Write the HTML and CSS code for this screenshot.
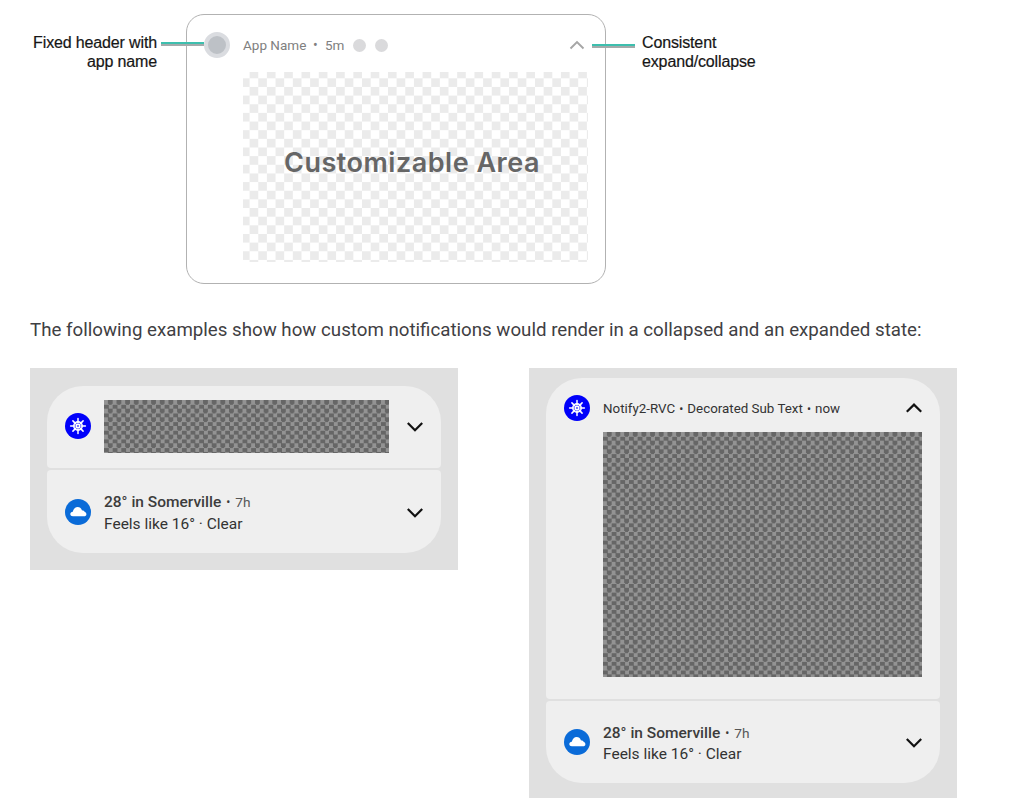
FILE: index.html
```html
<!DOCTYPE html>
<html lang="en">
<head>
<meta charset="utf-8">
<title>Custom notifications</title>
<link rel="stylesheet" href="styles.css">
</head>
<body>
<svg class="defs" width="0" height="0" aria-hidden="true">
  <symbol id="down" viewBox="0 0 18 12"><path d="M1.8 2 9 9.2 16.2 2" fill="none" stroke="currentColor" stroke-width="2.2"/></symbol>
  <symbol id="up" viewBox="0 0 18 12"><path d="M1.8 9.8 9 2.6 16.2 9.8" fill="none" stroke="currentColor" stroke-width="2.2"/></symbol>
  <symbol id="wheel" viewBox="0 0 26 26">
    <circle cx="13" cy="13" r="13" fill="#0000fa"/>
    <circle cx="13" cy="13" r="4.900" fill="#fff"/>
    <path d="M13 5.600v14.800M5.600 13h14.800M7.900 7.900l10.200 10.200M18.100 7.900 7.900 18.100" stroke="#fff" stroke-width="1.500" stroke-linecap="round"/>
    <g fill="#3c3cfb"><circle cx="13" cy="13" r=".9"/><circle cx="11.900" cy="10.400" r=".7"/><circle cx="14.100" cy="10.400" r=".7"/><circle cx="11.900" cy="15.600" r=".7"/><circle cx="14.100" cy="15.600" r=".7"/><circle cx="10.300" cy="12" r=".7"/><circle cx="10.300" cy="14" r=".7"/><circle cx="15.700" cy="12" r=".7"/><circle cx="15.700" cy="14" r=".7"/></g>
  </symbol>
  <symbol id="cloud" viewBox="0 0 26 26">
    <circle cx="13" cy="13" r="13" fill="#0a6bd8"/>
    <path d="M7.900 17.300c-1.500 0-2.600-.8-2.600-2.200 0-1.300 1-2.200 2.500-2.400C8.600 9.800 10.300 8 12.600 8c2.100 0 3.600 1.100 4.300 3.200 1.500 0 2.500.7 2.800 1.900 1.100.3 1.700 1.100 1.700 2.100 0 1.300-1 2.100-2.400 2.100z" fill="#fff"/>
  </symbol>
</svg>
<main class="page">
  <section class="anatomy">
    <p class="callout callout-left">Fixed header with<br>app name</p>
    <div class="template">
      <div class="template-head">
        <span class="avatar"></span>
        <span class="app-name">App Name</span><span class="bullet">•</span><span class="age">5m</span>
        <span class="dot"></span><span class="dot"></span>
        <svg class="template-chevron" viewBox="0 0 16 10"><path d="M1.500 8.500 8 2l6.500 6.500" fill="none" stroke="#a6a6a6" stroke-width="1.900"/></svg>
      </div>
      <div class="custom-area"><span class="custom-label">Customizable Area</span></div>
      <span class="leader leader-left"></span>
      <span class="leader leader-right"></span>
    </div>
    <p class="callout callout-right">Consistent<br>expand/collapse</p>
  </section>

  <p class="intro">The following examples show how custom notifications would render in a collapsed and an expanded state:</p>

  <section class="examples">
    <div class="shade collapsed">
      <article class="card card-top">
        <svg class="icon"><use href="#wheel"/></svg>
        <div class="checker small"></div>
        <svg class="chevron"><use href="#down"/></svg>
      </article>
      <article class="card card-bottom">
        <svg class="icon"><use href="#cloud"/></svg>
        <div class="weather">
          <div class="headline"><strong class="title">28° in Somerville</strong><span class="sep">•</span><span class="time">7h</span></div>
          <div class="detail">Feels like 16° · Clear</div>
        </div>
        <svg class="chevron"><use href="#down"/></svg>
      </article>
    </div>
    <div class="shade expanded">
      <article class="card card-top">
        <header class="notify-head">
          <svg class="icon"><use href="#wheel"/></svg>
          <div class="meta">Notify2-RVC <span class="meta-dot">•</span> Decorated Sub Text <span class="meta-dot">•</span> now</div>
          <svg class="chevron"><use href="#up"/></svg>
        </header>
        <div class="checker large"></div>
      </article>
      <article class="card card-bottom">
        <svg class="icon"><use href="#cloud"/></svg>
        <div class="weather">
          <div class="headline"><strong class="title">28° in Somerville</strong><span class="sep">•</span><span class="time">7h</span></div>
          <div class="detail">Feels like 16° · Clear</div>
        </div>
        <svg class="chevron"><use href="#down"/></svg>
      </article>
    </div>
  </section>
</main>
</body>
</html>
```
FILE: styles.css
```css
* { box-sizing: border-box; }
body { margin: 0; background: #fff; color: #3c4043; font-family: Roboto, sans-serif; }
p { margin: 0; }
svg { display: block; flex: none; }
.defs { position: absolute; }
.page { width: 1024px; height: 811px; overflow: hidden; padding: 14px 0 0 30px; }

.anatomy { display: flex; height: 270px; }
.callout { font: 16px/19px "Liberation Sans", Arial, sans-serif; color: #161616; padding-top: 19px; white-space: nowrap; letter-spacing: -.14px; -webkit-text-stroke: .2px #161616; }
.callout-left { width: 127px; text-align: right; margin-right: 29px; }
.callout-right { margin-left: 36px; }
.template { position: relative; width: 420px; height: 270px; border: 1px solid #b2b2b2; border-radius: 18px; padding: 16px 17px 0; }
.template-head { display: flex; align-items: center; height: 28px; font-size: 13.500px; color: #808080; }
.template-head span { flex: none; }
.avatar { width: 26px; height: 26px; border-radius: 50%; background: #bdc1c6; border: 4px solid #dadce0; margin-right: 13px; }
.app-name { width: 70px; }
.bullet { width: 12px; font-size: 14px; }
.age { width: 28px; }
.dot { width: 13px; height: 13px; border-radius: 50%; background: #dadadc; margin-right: 9px; }
.template-chevron { width: 16px; height: 10px; margin-left: auto; margin-right: 3px; }
.custom-area { width: 345px; height: 190px; margin: 13px 0 0 39px; display: flex; align-items: center; justify-content: center; background: repeating-conic-gradient(#ebebeb 0 25%, #fff 0 50%) 6.600px 6.300px / 17.300px 17.300px; }
.custom-label { font: 600 27px/32px Inter, sans-serif; letter-spacing: .5px; color: #666; margin: -9px 0 0 -7px; white-space: nowrap; }
.leader { position: absolute; height: 4px; background: linear-gradient(#3dbfae 0 60%, #a3aaaa 60%); }
.leader-left { left: -26px; top: 27px; width: 43px; }
.leader-right { left: 405px; top: 29px; width: 43px; }

.intro { margin-top: 34px; height: 24px; font-size: 18.720px; line-height: 24px; color: #3f4043; white-space: nowrap; }

.examples { display: flex; align-items: flex-start; gap: 71px; margin-top: 26px; }
.shade { width: 428px; background: #e0e0e0; display: flex; flex-direction: column; gap: 2px; padding-left: 17px; padding-right: 17px; }
.collapsed { height: 202px; padding-top: 18px; }
.expanded { height: 430px; padding-top: 10px; }
.card { background: #efefef; display: flex; align-items: center; padding: 0 17px 0 18px; }
.card-top { border-radius: 36px 36px 4px 4px; }
.card-bottom { border-radius: 4px 4px 36px 36px; height: 82px; }
.collapsed .card-bottom { height: 83px; }
.collapsed .card-top { height: 82px; padding-bottom: 2px; }
.expanded .card-top { height: 321px; display: block; padding-top: 16px; }
.icon { width: 26px; height: 26px; margin-right: 13px; }
.chevron { width: 18px; height: 12px; color: #111; margin-left: auto; }
.card > .chevron { margin-top: 2px; }
.notify-head { display: flex; align-items: center; height: 28px; }
.meta { font-size: 13.350px; color: #333; white-space: nowrap; }
.meta-dot, .sep { font-size: 12px; }
.meta-dot { margin: 0 .8px; }
.checker { background: repeating-conic-gradient(#666 0 25%, #939393 0 50%) 0 0 / 8.670px 8.670px; }
.small { width: 285px; height: 53px; }
.large { width: 319px; height: 245px; margin: 10px 0 0 39px; }
.weather { color: #3c3c3c; padding-top: 3px; }
.headline { display: flex; align-items: center; height: 21px; }
.title { font-size: 15.500px; font-weight: 500; }
.sep { margin: 0 5px; }
.time { font-size: 13.700px; color: #555; }
.detail { font-size: 15.500px; line-height: 22px; color: #333; }
```
